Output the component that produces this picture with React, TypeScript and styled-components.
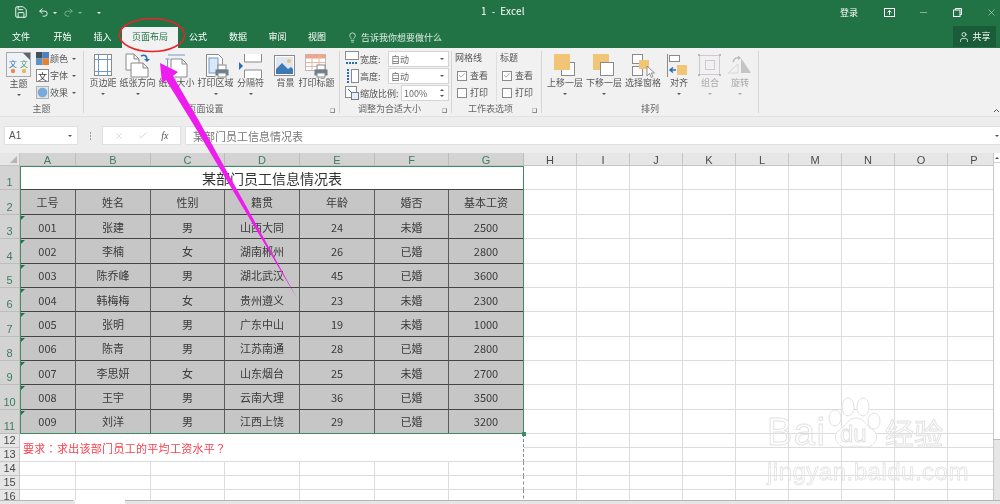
import React from 'react';
import styled, { createGlobalStyle } from 'styled-components';
import { Save, Undo2, Redo2, Lightbulb, Minus, X, Check, User } from 'lucide-react';

const CJK = `"Noto Sans CJK SC", "Liberation Sans", sans-serif`;

const Global = createGlobalStyle`
    html, body { margin: 0; padding: 0; background: #fff; }
    * { box-sizing: border-box; }
`;

const Page = styled.div`
    position: relative;
    width: 1000px;
    height: 504px;
    overflow: hidden;
    display: flex;
    flex-direction: column;
    font-family: ${CJK};
    color: #444;
    background: #e9e9e9;
    filter: blur(0.4px);
`;

/* title bar */
const TitleBar = styled.div`
    height: 24px;
    background: #217346;
    color: #fff;
    display: grid;
    grid-template-columns: 1fr 1fr;
    align-items: center;
    position: relative;
`;

const Qat = styled.div`
    display: flex;
    align-items: center;
    padding-left: 14px;
    height: 24px;
`;

const QatGap = styled.span`
    width: 10px;
`;

const QatCaret = styled.span<{ $dim?: boolean; $gap?: number }>`
    width: 0;
    height: 0;
    margin: 1px ${({ $gap }) => $gap ?? 6}px 0 4px;
    border-left: 2px solid transparent;
    border-right: 2px solid transparent;
    border-top: 2px solid ${({ $dim }) => ($dim ? '#8ab59d' : '#fff')};
`;

const DocTitle = styled.div`
    position: absolute;
    left: 481px;
    top: 3px;
    font-size: 10px;
    line-height: 16px;
    letter-spacing: 0.2px;
    white-space: pre;
`;

const WinControls = styled.div`
    display: flex;
    align-items: center;
    justify-content: flex-end;
    height: 24px;
    margin-right: -8px;
`;

const SignIn = styled.span`
    font-size: 9px;
    width: 32px;
    text-align: left;
`;

const WinBtn = styled.span`
    width: 34px;
    display: flex;
    justify-content: center;
    align-items: center;
`;

/* tabs */
const TabBar = styled.div`
    height: 24px;
    background: #217346;
    display: flex;
    align-items: flex-end;
    color: #fff;
    font-size: 9px;
`;

const Tab = styled.div<{ $w: number; $active?: boolean }>`
    width: ${({ $w }) => $w}px;
    height: 21px;
    line-height: 19px;
    text-align: center;
    background: ${({ $active }) => ($active ? '#f1f1f1' : 'transparent')};
    color: ${({ $active }) => ($active ? '#217346' : '#fff')};
`;

const TellMe = styled.div`
    display: flex;
    align-items: center;
    gap: 3px;
    margin-left: 10px;
    height: 21px;
    color: #dcebe2;
    font-size: 9px;
`;

const ShareBtn = styled.div`
    margin-left: auto;
    margin-right: 4px;
    margin-bottom: 1px;
    width: 43px;
    height: 21px;
    background: #1a5c39;
    display: flex;
    align-items: center;
    justify-content: center;
    gap: 2px;
    font-size: 9px;
`;

/* ribbon */
const Ribbon = styled.div`
    height: 68px;
    background: #f1f1f1;
    display: flex;
    padding: 3px 0;
    position: relative;
`;

const Group = styled.section<{ $w: number }>`
    width: ${({ $w }) => $w}px;
    border-right: 1px solid #d6d6d6;
    display: flex;
    flex-direction: column;
    position: relative;
`;

const GroupBody = styled.div<{ $pad?: number }>`
    flex: 1;
    display: flex;
    padding-left: ${({ $pad }) => $pad ?? 0}px;
`;

const GroupLabel = styled.div<{ $launcher?: boolean }>`
    height: 9px;
    line-height: 9px;
    font-size: 9px;
    text-align: center;
    color: #666;
    padding-right: ${({ $launcher }) => ($launcher ? 12 : 0)}px;
`;

const Launcher = styled.span`
    position: absolute;
    right: 4px;
    bottom: 0;
    width: 5px;
    height: 5px;
    border: 1px solid #8c8c8c;
    border-top-color: #c8c8c8;
    border-left-color: #c8c8c8;
`;

const LargeBtn = styled.div<{ $w: number; $off?: boolean }>`
    width: ${({ $w }) => $w}px;
    display: flex;
    flex-direction: column;
    align-items: center;
    padding-top: 2px;
    font-size: 9px;
    white-space: nowrap;
    color: ${({ $off }) => ($off ? '#a8a8a8' : '#555')};
`;

const BtnText = styled.span`
    line-height: 11px;
    margin-top: -2px;
`;

const Caret = styled.span<{ $off?: boolean }>`
    display: inline-block;
    width: 0;
    height: 0;
    margin-top: 5px;
    border-left: 2px solid transparent;
    border-right: 2px solid transparent;
    border-top: 2px solid ${({ $off }) => ($off ? '#aaa' : '#555')};
`;

const InlineCaret = styled(Caret)`
    margin-top: 0;
`;

const ThemeTile = styled.div`
    width: 25px;
    height: 25px;
    margin: -1px 0 3px;
    background: #d9d9d9;
    border: 1px solid #a9a9a9;
    display: flex;
    align-items: center;
    justify-content: center;
`;

const SmallCol = styled.div`
    display: flex;
    flex-direction: column;
    gap: 4px;
    margin-left: 5px;
    padding-top: 1px;
`;

const SmallRow = styled.div`
    display: flex;
    align-items: center;
    gap: 1px;
    height: 13px;
    font-size: 9px;
    color: #555;
`;

const SmallCaret = styled(Caret)`
    margin: 0 0 0 3px;
`;

const SizeCol = styled.div`
    display: flex;
    flex-direction: column;
    gap: 1px;
    padding-left: 5px;
`;

const SizeRow = styled.div`
    display: flex;
    align-items: center;
    height: 16px;
    font-size: 9px;
    color: #555;
`;

const SizeLabel = styled.span<{ $w: number }>`
    width: ${({ $w }) => $w}px;
    margin-left: 1px;
    white-space: nowrap;
`;

const Combo = styled.div<{ $w: number }>`
    width: ${({ $w }) => $w}px;
    height: 16px;
    background: #fff;
    border: 1px solid #d4d4d4;
    display: flex;
    align-items: center;
    justify-content: space-between;
    padding: 0 4px 0 2px;
    font-size: 9px;
    color: #666;
`;

const Spin = styled.div`
    display: flex;
    flex-direction: column;
    gap: 4px;
`;

const SpinUp = styled.span`
    width: 0;
    height: 0;
    border-left: 2px solid transparent;
    border-right: 2px solid transparent;
    border-bottom: 2px solid #555;
`;

const SpinDown = styled(SpinUp)`
    border-bottom: 0;
    border-top: 2px solid #555;
`;

const OptionCols = styled.div`
    display: flex;
    padding-left: 3px;
`;

const OptionCol = styled.div<{ $w: number; $rule?: boolean; $pad?: number }>`
    width: ${({ $w }) => $w}px;
    display: flex;
    flex-direction: column;
    font-size: 9px;
    color: #555;
    height: 50px;
    padding-left: ${({ $pad }) => $pad ?? 0}px;
    border-right: ${({ $rule }) => ($rule ? '1px solid #dedede' : '0')};
    margin-top: 1px;
`;

const OptionHead = styled.div`
    height: 14px;
    line-height: 12px;
    margin-bottom: 1px;
`;

const OptionRow = styled.div`
    display: flex;
    align-items: center;
    gap: 3px;
    height: 17px;
    padding-left: 2px;
`;

const Box = styled.span`
    width: 10px;
    height: 10px;
    background: #fff;
    border: 1px solid #8a8a8a;
    display: flex;
    align-items: center;
    justify-content: center;
`;

const CollapseMark = styled.svg`
    position: absolute;
    right: 0;
    bottom: 3px;
`;

/* formula bar */
const FormulaBar = styled.div`
    height: 37px;
    padding: 9px 0 8px 4px;
    background: #ededed;
    border-top: 1px solid #e2e2e2;
    display: flex;
    align-items: stretch;
`;

const NameBox = styled.div`
    width: 74px;
    background: #fff;
    border: 1px solid #e0e0e0;
    display: flex;
    align-items: center;
    justify-content: space-between;
    padding: 0 5px 0 4px;
    font-family: "Liberation Sans", sans-serif;
    font-size: 10px;
    color: #555;
`;

const Grip = styled.div`
    width: 24px;
    display: flex;
    flex-direction: column;
    align-items: center;
    justify-content: center;
    gap: 1px;
`;

const GripDot = styled.span`
    width: 1px;
    height: 2px;
    background: #a0a0a0;
`;

const FxBox = styled.div`
    width: 79px;
    background: #fff;
    border: 1px solid #e0e0e0;
    display: flex;
    align-items: center;
    justify-content: space-around;
    padding: 0 5px;
    color: #b4b4b4;
`;

const FxMark = styled.span`
    font-family: "Liberation Serif", serif;
    font-style: italic;
    font-size: 10px;
    color: #555;
`;

const FormulaInput = styled.div`
    margin-left: 4px;
    flex: 1;
    background: #fff;
    border: 1px solid #e0e0e0;
    border-right: 0;
    display: flex;
    align-items: center;
    justify-content: space-between;
    padding: 0 1px 0 7px;
    font-size: 11px;
    color: #777;
`;

/* sheet */
const SheetArea = styled.div`
    height: 347px;
    display: flex;
    background: #fff;
`;

const Grid = styled.div`
    position: relative;
    width: 993px;
    height: 347px;
    overflow: hidden;
    display: grid;
    grid-template-columns: 20px 56px 75px 74px 75px 75px 74px 75px repeat(9, 53px);
    grid-template-rows: 13px 24px 25px repeat(9, 24.33px) repeat(5, 14px);
    font-size: 11px;
`;

const Corner = styled.div`
    background: #e6e6e6;
    border-right: 1px solid #c4c4c4;
    border-bottom: 1px solid #c4c4c4;
    position: relative;
    &::after {
        content: '';
        position: absolute;
        right: 2px;
        bottom: 2px;
        border-left: 7px solid transparent;
        border-bottom: 7px solid #b5b5b5;
    }
`;

const ColHead = styled.div<{ $sel?: boolean }>`
    background: ${({ $sel }) => ($sel ? '#d3d3d3' : '#e6e6e6')};
    color: ${({ $sel }) => ($sel ? '#3f7d5e' : '#4a4a4a')};
    border-right: 1px solid ${({ $sel }) => ($sel ? '#bdbdbd' : '#c6c6c6')};
    border-bottom: 1px solid #c4c4c4;
    font-family: "Liberation Sans", sans-serif;
    font-size: 11px;
    line-height: 14px;
    text-align: center;
`;

const RowHead = styled.div<{ $sel?: boolean }>`
    background: ${({ $sel }) => ($sel ? '#d3d3d3' : '#e6e6e6')};
    color: ${({ $sel }) => ($sel ? '#3f7d5e' : '#4a4a4a')};
    border-bottom: 1px solid ${({ $sel }) => ($sel ? '#bdbdbd' : '#c6c6c6')};
    border-right: 1px solid #c4c4c4;
    font-family: "Liberation Sans", sans-serif;
    font-size: 11px;
    line-height: 13px;
    display: flex;
    align-items: flex-end;
    justify-content: center;
`;

const Blank = styled.div<{ $dash?: boolean }>`
    border-right: 1px ${({ $dash }) => ($dash ? 'dashed #8a8a8a' : 'solid #dcdcdc')};
    border-bottom: 1px solid #dcdcdc;
`;

const TitleCell = styled.div`
    grid-column: span 7;
    background: #fff;
    border-bottom: 1px solid #444;
    color: #333;
    font-size: 14px;
    display: flex;
    align-items: center;
    justify-content: center;
`;

const DataCell = styled.div<{ $flag?: boolean }>`
    position: relative;
    background: #c6c6c6;
    border-right: 1.5px solid #5c5c5c;
    border-bottom: 1px solid #444;
    color: #3a3a3a;
    display: flex;
    align-items: center;
    justify-content: center;
    &::before {
        content: '';
        display: ${({ $flag }) => ($flag ? 'block' : 'none')};
        position: absolute;
        left: 1px;
        top: 1px;
        border-top: 4px solid #217346;
        border-right: 4px solid transparent;
    }
`;

const NoteCell = styled.div`
    grid-column: span 7;
    grid-row: span 2;
    border-right: 1px dashed #8a8a8a;
    border-bottom: 1px solid #dcdcdc;
    color: #f8404c;
    font-family: "Noto Sans CJK TC", "Noto Sans CJK SC", sans-serif;
    font-size: 11px;
    letter-spacing: 0.3px;
    display: flex;
    align-items: center;
    padding: 1px 0 0 3px;
`;

const Selection = styled.div`
    position: absolute;
    inset: 0;
    grid-area: 2 / 2 / 13 / 9;
    border: 1.5px solid #3f8a64;
    pointer-events: none;
    &::after {
        content: '';
        position: absolute;
        right: -3px;
        bottom: -3px;
        width: 4px;
        height: 4px;
        background: #3f8a64;
    }
`;

const VScroll = styled.div`
    width: 7px;
    background: #e6e6e6;
    border-left: 1px solid #c8c8c8;
    display: flex;
    flex-direction: column;
`;

const ScrollArrow = styled.div`
    height: 10px;
    background: #fff;
    border-bottom: 1px solid #cfcfcf;
    display: flex;
    align-items: center;
    justify-content: center;
`;

const ScrollThumb = styled.div`
    height: 277px;
    background: #fff;
    border-bottom: 1px solid #bdbdbd;
`;

const TabStrip = styled.div`
    flex: 1;
    display: flex;
    background: #e6e6e6;
`;

const SheetTab = styled.div<{ $w: number; $on?: boolean }>`
    width: ${({ $w }) => $w}px;
    flex: ${({ $w }) => ($w ? 'none' : 1)};
    background: ${({ $on }) => ($on ? '#fff' : '#e6e6e6')};
    border-top: ${({ $on }) => ($on ? '0' : '1px solid #b4b4b4')};
    margin-right: ${({ $w }) => ($w === 73 ? 2 : 0)}px;
`;

/* annotations on top of the screenshot */
const Marks = styled.svg`
    position: absolute;
    left: 0;
    top: 0;
    pointer-events: none;
`;

const Watermark = styled.div`
    position: absolute;
    left: 767px;
    top: 396px;
    width: 180px;
    pointer-events: none;
    color: transparent;
    -webkit-text-stroke: 1px #e3e3e3;
    font-family: "Liberation Sans", sans-serif;
`;

const WmTop = styled.div`
    display: flex;
    align-items: flex-end;
    height: 58px;
`;

const WmBai = styled.span`
    font-size: 38px;
    line-height: 44px;
    width: 60px;
    letter-spacing: 1.5px;
`;

const WmPaw = styled.div`
    width: 58px;
    height: 58px;
    flex: none;
    position: relative;
`;

const WmDu = styled.span`
    position: absolute;
    left: 13px;
    bottom: 7px;
    font-size: 24px;
    line-height: 26px;
    -webkit-text-stroke: 0.8px #dcdcdc;
`;

const WmCn = styled.span`
    font-family: ${CJK};
    font-size: 29px;
    line-height: 44px;
    white-space: nowrap;
`;

const WmUrl = styled.div`
    font-size: 24px;
    line-height: 26px;
    margin-top: 5px;
    white-space: nowrap;
    letter-spacing: 0.5px;
    -webkit-text-stroke: 0.8px #e3e3e3;
`;

/* ribbon drawings */
const Ico = ({ children }: { children: React.ReactNode }) => (
    <svg width="28" height="26" viewBox="0 0 28 26" fill="none">{children}</svg>
);

const Printer = ({ x, y }: { x: number; y: number }) => (
    <g transform={`translate(${x} ${y})`}>
        <rect x="3" y="0" width="8" height="5" fill="#fff" stroke="#8a8a8a" />
        <rect x="0.5" y="4.5" width="13" height="6" fill="#6d7f8f" />
        <rect x="3" y="8" width="8" height="4" fill="#fff" stroke="#8a8a8a" />
    </g>
);

const Sheet = ({ x, y, w, h }: { x: number; y: number; w: number; h: number }) => (
    <path
        d={`M${x} ${y}h${w - 5}l5 5v${h - 5}h-${w}z M${x + w - 5} ${y}v5h5`}
        fill="#fff"
        stroke="#8a8a8a"
    />
);

const MarginsIcon = () => (
    <Ico>
        <rect x="5.5" y="1.5" width="17" height="21" fill="#fff" stroke="#8a8a8a" />
        <path d="M9.5 1.5v21M18.5 1.5v21M5.5 6.5h17M5.5 18.5h17" stroke="#6d9bd1" />
    </Ico>
);

const OrientationIcon = () => (
    <Ico>
        <Sheet x={2} y={1} w={13} h={16} />
        <Sheet x={7} y={10} w={17} h={14} />
        <path d="M17 3c4-2 6 0 6 4" stroke="#2b6cb5" strokeWidth="1.6" />
        <path d="M20 6l3 3 3-3z" fill="#2b6cb5" />
    </Ico>
);

const SizeIcon = () => (
    <Ico>
        <path d="M5 2h17M4.5 6v18M2.5 6h4M2.5 24h4" stroke="#6d9bd1" />
        <Sheet x={8} y={6} w={16} h={18} />
    </Ico>
);

const PrintAreaIcon = () => (
    <Ico>
        <path d="M4.5 1.5h12l4 4v6M4.5 1.5v22h9" fill="#fff" stroke="#8a8a8a" />
        <rect x="7" y="5" width="9" height="15" fill="#dce7f4" stroke="#6d9bd1" />
        <Printer x={13} y={12} />
    </Ico>
);

const BreaksIcon = () => (
    <Ico>
        <path d="M7.5 1v8h17V1M7.5 25v-8h17v8" fill="#fff" stroke="#8a8a8a" />
        <path d="M2 9l4 4-4 4z" fill="#2b6cb5" />
    </Ico>
);

const BackgroundIcon = () => (
    <Ico>
        <rect x="2.5" y="2.5" width="20" height="20" fill="#fff" stroke="#8a8a8a" />
        <rect x="4" y="4" width="17" height="17" fill="#dfe8f0" />
        <circle cx="17" cy="8" r="2" fill="#edc26f" />
        <path d="M4 21v-5l6-6 6 6 3-2 2 2v5z" fill="#3f79b5" />
    </Ico>
);

const PrintTitlesIcon = () => (
    <Ico>
        <rect x="2.5" y="1.5" width="20" height="16" fill="#fff" stroke="#b8b8b8" />
        <rect x="2.5" y="1.5" width="20" height="4" fill="#f0a58a" />
        <path d="M2.5 9.5h20M2.5 13.5h20M9 1.5v16M16 1.5v16" stroke="#e8b5a2" />
        <Printer x={11} y={12} />
    </Ico>
);

const ForwardIcon = ({ back }: { back?: boolean }) => (
    <Ico>
        {back ? (
            <>
                <rect x="3" y="1" width="16" height="16" fill="#f0c575" />
                <rect x="10.5" y="9.5" width="13" height="13" fill="#fff" stroke="#8a8a8a" />
            </>
        ) : (
            <>
                <rect x="10.5" y="9.5" width="13" height="13" fill="#fff" stroke="#8a8a8a" />
                <rect x="3" y="1" width="16" height="16" fill="#f0c575" />
            </>
        )}
    </Ico>
);

const PaneIcon = () => (
    <Ico>
        <rect x="3.5" y="1.5" width="10" height="9" fill="#fff" stroke="#8a8a8a" />
        <rect x="3.5" y="13.5" width="10" height="9" fill="#fff" stroke="#8a8a8a" />
        <rect x="10" y="7" width="10" height="9" fill="#f0c575" />
        <path d="M18 13v10l2.500-2.500 2 4 1.500-1-2-3.500h3.500z" fill="#fff" stroke="#777" strokeWidth="0.8" />
    </Ico>
);

const AlignIcon = () => (
    <Ico>
        <path d="M2.500 1v23" stroke="#8a8a8a" />
        <rect x="4.500" y="2.500" width="10" height="6" fill="#fff" stroke="#8a8a8a" />
        <rect x="12" y="12" width="10" height="10" fill="#f0c575" />
        <path d="M11 17H6M8 14.500L5 17l3 2.500" stroke="#2b6cb5" strokeWidth="1.500" />
    </Ico>
);

const GroupIcon = () => (
    <Ico>
        <rect x="3.500" y="2.500" width="20" height="19" stroke="#d0c8d0" />
        <rect x="9.500" y="7.500" width="9" height="9" stroke="#d0c8d0" />
        <path d="M2 1h2v2H2zM23 1h2v2h-2zM2 21h2v2H2zM23 21h2v2h-2z" fill="#b8b8b8" />
    </Ico>
);

const RotateIcon = () => (
    <Ico>
        <path d="M15 5l10 15H15z" fill="#c4c4c4" />
        <path d="M2 20l10-9v9z" fill="#f1f1f1" stroke="#d8d8d8" />
        <path d="M7 9c1-4 4-5 7-4" stroke="#b8b8b8" strokeWidth="1.400" />
        <path d="M12 2.500l3 2.500-3 2z" fill="#b8b8b8" />
    </Ico>
);

const ThemeGlyph = () => (
    <svg width="23" height="23" viewBox="0 0 23 23" fill="none">
        <rect width="23" height="23" fill="#eef2f7" />
        <path d="M16 0h7v7z" fill="#5d6470" />
        <text x="2" y="14" fontSize="8" fill="#3a6ea5">文</text>
        <text x="13" y="14" fontSize="8" fill="#4b9a5a">文</text>
        <circle cx="6" cy="18" r="2.200" fill="#e58a50" />
        <circle cx="17" cy="18" r="2.200" fill="#e6b94f" />
    </svg>
);

const ColorsGlyph = () => (
    <svg width="13" height="13" viewBox="0 0 13 13">
        <rect width="6.500" height="6.500" fill="#444f5e" />
        <rect x="6.500" width="6.500" height="6.500" fill="#4c7fbe" />
        <rect y="6.500" width="6.500" height="6.500" fill="#5a95c9" />
        <rect x="6.500" y="6.500" width="6.500" height="6.500" fill="#e8812f" />
    </svg>
);

const FontsGlyph = () => (
    <svg width="13" height="13" viewBox="0 0 13 13" fill="none">
        <rect x="0.500" y="0.500" width="12" height="12" fill="#fff" stroke="#8a8a8a" />
        <text x="2" y="10.500" fontSize="9" fill="#333">文</text>
    </svg>
);

const EffectsGlyph = () => (
    <svg width="13" height="13" viewBox="0 0 13 13" fill="none">
        <rect x="0.500" y="0.500" width="12" height="12" fill="#e4e4e4" stroke="#b0b0b0" />
        <circle cx="6.500" cy="6.500" r="4.800" fill="#7aa9dd" />
    </svg>
);

const WidthGlyph = () => (
    <svg width="14" height="16" viewBox="0 0 14 16" fill="none">
        <rect x="0.500" y="0.500" width="13" height="8" fill="#fff" stroke="#8a8a8a" />
        <path d="M1 12h12" stroke="#2b6cb5" strokeDasharray="2 1" strokeWidth="2" />
    </svg>
);

const HeightGlyph = () => (
    <svg width="14" height="16" viewBox="0 0 14 16" fill="none">
        <rect x="6.500" y="1.500" width="7" height="13" fill="#fff" stroke="#8a8a8a" />
        <path d="M3 1v14" stroke="#2b6cb5" strokeDasharray="2 1" strokeWidth="2" />
    </svg>
);

const ScaleGlyph = () => (
    <svg width="14" height="14" viewBox="0 0 14 14" fill="none">
        <rect x="0.500" y="0.500" width="11" height="11" fill="#fff" stroke="#8a8a8a" />
        <rect x="6.500" y="6.500" width="7" height="7" fill="#e9eef5" stroke="#6d7f8f" />
        <path d="M3 3l4 4" stroke="#2b6cb5" />
    </svg>
);

const COL_LETTERS = 'ABCDEFGHIJKLMNOP'.split('');
const TAIL = 9;

const HEADS = ['工号', '姓名', '性别', '籍贯', '年龄', '婚否', '基本工资'];

const STAFF = [
    ['001', '张建', '男', '山西大同', '24', '未婚', '2500'],
    ['002', '李楠', '女', '湖南郴州', '26', '已婚', '2800'],
    ['003', '陈乔峰', '男', '湖北武汉', '45', '已婚', '3600'],
    ['004', '韩梅梅', '女', '贵州遵义', '23', '未婚', '2300'],
    ['005', '张明', '男', '广东中山', '19', '未婚', '1000'],
    ['006', '陈青', '男', '江苏南通', '28', '已婚', '2800'],
    ['007', '李思妍', '女', '山东烟台', '25', '未婚', '2700'],
    ['008', '王宇', '男', '云南大理', '36', '已婚', '3500'],
    ['009', '刘洋', '男', '江西上饶', '29', '已婚', '3200'],
];

const PAGE_BUTTONS = [
    { w: 34, label: '页边距', icon: <MarginsIcon />, caret: true },
    { w: 35, label: '纸张方向', icon: <OrientationIcon />, caret: true },
    { w: 43, label: '纸张大小', icon: <SizeIcon />, caret: true },
    { w: 35, label: '打印区域', icon: <PrintAreaIcon />, caret: true },
    { w: 35, label: '分隔符', icon: <BreaksIcon />, caret: true },
    { w: 35, label: '背景', icon: <BackgroundIcon /> },
    { w: 27, label: '打印标题', icon: <PrintTitlesIcon /> },
];

const ARRANGE_BUTTONS = [
    { w: 40, label: '上移一层', icon: <ForwardIcon />, caret: true },
    { w: 38, label: '下移一层', icon: <ForwardIcon back />, caret: true },
    { w: 40, label: '选择窗格', icon: <PaneIcon /> },
    { w: 32, label: '对齐', icon: <AlignIcon />, caret: true },
    { w: 30, label: '组合', icon: <GroupIcon />, caret: true, off: true },
    { w: 30, label: '旋转', icon: <RotateIcon />, caret: true, off: true },
];

const TABS = [
    { w: 42, label: '文件' },
    { w: 41, label: '开始' },
    { w: 39, label: '插入' },
    { w: 56, label: '页面布局', active: true },
    { w: 40, label: '公式' },
    { w: 40, label: '数据' },
    { w: 39, label: '审阅' },
    { w: 40, label: '视图' },
];

const blanks = (n: number, key: string) =>
    Array.from({ length: n }, (_, i) => <Blank key={`${key}-${i}`} />);

const Tick = () => <Check size={9} strokeWidth={1.5} color="#555" />;

const RibbonButton = ({ w, label, icon, caret, off }: {
    w: number; label: string; icon: React.ReactNode; caret?: boolean; off?: boolean;
}) => (
    <LargeBtn $w={w} $off={off}>
        {icon}
        <BtnText>{label}</BtnText>
        {caret && <Caret $off={off} />}
    </LargeBtn>
);

export default function App() {
    return (
        <Page>
            <Global />
            <TitleBar>
                <Qat>
                    <Save size={14} strokeWidth={1.6} />
                    <QatGap />
                    <Undo2 size={11} strokeWidth={2} />
                    <QatCaret />
                    <Redo2 size={11} strokeWidth={2} color="#7fb096" />
                    <QatCaret $dim $gap={11} />
                    <QatCaret />
                </Qat>
                <DocTitle>1  -  Excel</DocTitle>
                <WinControls>
                    <SignIn>登录</SignIn>
                    <WinBtn>
                        <svg width="11" height="9" viewBox="0 0 11 9" fill="none">
                            <rect x="0.5" y="0.5" width="10" height="8" stroke="#fff" />
                            <path d="M5.500 2v5M3.500 4.500l2-2 2 2" stroke="#fff" />
                        </svg>
                    </WinBtn>
                    <WinBtn><Minus size={11} strokeWidth={1} /></WinBtn>
                    <WinBtn>
                        <svg width="9" height="9" viewBox="0 0 9 9" fill="none">
                            <rect x="0.500" y="2" width="6.500" height="6.500" stroke="#fff" />
                            <path d="M2.500 2V0.500h6v6H7" stroke="#fff" />
                        </svg>
                    </WinBtn>
                    <WinBtn><X size={11} strokeWidth={1} /></WinBtn>
                </WinControls>
            </TitleBar>
            <TabBar>
                {TABS.map(t => (
                    <Tab key={t.label} $w={t.w} $active={t.active}>{t.label}</Tab>
                ))}
                <TellMe>
                    <Lightbulb size={11} strokeWidth={1.5} color="#fff" />
                    告诉我你想要做什么
                </TellMe>
                <ShareBtn>
                    <User size={12} strokeWidth={1.5} />
                    共享
                </ShareBtn>
            </TabBar>
            <Ribbon>
                <Group $w={84}>
                    <GroupBody $pad={6}>
                        <LargeBtn $w={25}>
                            <ThemeTile><ThemeGlyph /></ThemeTile>
                            <BtnText>主题</BtnText>
                            <Caret />
                        </LargeBtn>
                        <SmallCol>
                            <SmallRow><ColorsGlyph />颜色<SmallCaret /></SmallRow>
                            <SmallRow><FontsGlyph />字体<SmallCaret /></SmallRow>
                            <SmallRow><EffectsGlyph />效果<SmallCaret /></SmallRow>
                        </SmallCol>
                    </GroupBody>
                    <GroupLabel>主题</GroupLabel>
                </Group>
                <Group $w={256}>
                    <GroupBody $pad={2}>
                        {PAGE_BUTTONS.map(b => <RibbonButton key={b.label} {...b} />)}
                    </GroupBody>
                    <GroupLabel $launcher>页面设置</GroupLabel>
                    <Launcher />
                </Group>
                <Group $w={112}>
                    <GroupBody>
                        <SizeCol>
                            <SizeRow><WidthGlyph /><SizeLabel $w={28}>宽度:</SizeLabel><Combo $w={61}>自动<InlineCaret /></Combo></SizeRow>
                            <SizeRow><HeightGlyph /><SizeLabel $w={28}>高度:</SizeLabel><Combo $w={61}>自动<InlineCaret /></Combo></SizeRow>
                            <SizeRow><ScaleGlyph /><SizeLabel $w={41}>缩放比例:</SizeLabel><Combo $w={48}>100%<Spin><SpinUp /><SpinDown /></Spin></Combo></SizeRow>
                        </SizeCol>
                    </GroupBody>
                    <GroupLabel $launcher>调整为合适大小</GroupLabel>
                    <Launcher />
                </Group>
                <Group $w={90}>
                    <GroupBody>
                        <OptionCols>
                            <OptionCol $w={42} $rule>
                                <OptionHead>网格线</OptionHead>
                                <OptionRow><Box><Tick /></Box>查看</OptionRow>
                                <OptionRow><Box />打印</OptionRow>
                            </OptionCol>
                            <OptionCol $w={40} $pad={3}>
                                <OptionHead>标题</OptionHead>
                                <OptionRow><Box><Tick /></Box>查看</OptionRow>
                                <OptionRow><Box />打印</OptionRow>
                            </OptionCol>
                        </OptionCols>
                    </GroupBody>
                    <GroupLabel $launcher>工作表选项</GroupLabel>
                    <Launcher />
                </Group>
                <Group $w={217}>
                    <GroupBody $pad={3}>
                        {ARRANGE_BUTTONS.map(b => <RibbonButton key={b.label} {...b} />)}
                    </GroupBody>
                    <GroupLabel>排列</GroupLabel>
                </Group>
                <CollapseMark width="7" height="5" viewBox="0 0 7 5" fill="none">
                    <path d="M1 4l2.500-2.500L6 4" stroke="#555" />
                </CollapseMark>
            </Ribbon>
            <FormulaBar>
                <NameBox>A1<InlineCaret /></NameBox>
                <Grip><GripDot /><GripDot /><GripDot /></Grip>
                <FxBox>
                    <X size={10} strokeWidth={1.2} />
                    <Check size={11} strokeWidth={1.2} />
                    <FxMark>fx</FxMark>
                </FxBox>
                <FormulaInput>
                    <span>某部门员工信息情况表</span>
                    <InlineCaret />
                </FormulaInput>
            </FormulaBar>
            <SheetArea>
                <Grid>
                    <Corner />
                    {COL_LETTERS.map((c, i) => <ColHead key={c} $sel={i < 7}>{c}</ColHead>)}

                    <RowHead $sel>1</RowHead>
                    <TitleCell>某部门员工信息情况表</TitleCell>
                    {blanks(TAIL, 'r1')}

                    <RowHead $sel>2</RowHead>
                    {HEADS.map(h => <DataCell key={h}>{h}</DataCell>)}
                    {blanks(TAIL, 'r2')}

                    {STAFF.map((row, r) => (
                        <React.Fragment key={row[0]}>
                            <RowHead $sel>{r + 3}</RowHead>
                            {row.map((v, c) => <DataCell key={c} $flag={c === 0}>{v}</DataCell>)}
                            {blanks(TAIL, `s${r}`)}
                        </React.Fragment>
                    ))}

                    <RowHead>12</RowHead>
                    <NoteCell>要求：求出该部门员工的平均工资水平？</NoteCell>
                    {blanks(TAIL, 'r12')}
                    <RowHead>13</RowHead>
                    {blanks(TAIL, 'r13')}

                    {[14, 15, 16].map(n => (
                        <React.Fragment key={n}>
                            <RowHead>{n}</RowHead>
                            {blanks(6, `a${n}`)}
                            <Blank $dash />
                            {blanks(TAIL, `b${n}`)}
                        </React.Fragment>
                    ))}
                    <Selection />
                </Grid>
                <VScroll>
                    <ScrollArrow><SpinUp /></ScrollArrow>
                    <ScrollThumb />
                </VScroll>
            </SheetArea>
            <TabStrip>
                <SheetTab $w={73} />
                <SheetTab $w={50} $on />
                <SheetTab $w={0} />
            </TabStrip>

            <Marks width="1000" height="504" viewBox="0 0 1000 504" fill="none">
                <ellipse cx="152" cy="35" rx="32.500" ry="16.500" stroke="#e5252a" strokeWidth="1.600" />
                <path d="M160 63L178 72 173 76 199 121 297.500 299 192 122 166 80 162 83z" fill="#ee1cec" />
            </Marks>
            <Watermark>
                <WmTop>
                    <WmBai>Bai</WmBai>
                    <WmPaw>
                        <svg width="58" height="58" viewBox="0 0 58 58" fill="#fff" stroke="#e3e3e3">
                            <ellipse cx="21" cy="11" rx="6" ry="9" />
                            <ellipse cx="36" cy="11" rx="6" ry="9" />
                            <ellipse cx="8" cy="22" rx="6" ry="8" />
                            <ellipse cx="47" cy="25" rx="6" ry="8" />
                            <path d="M29 22c8 0 10 8 17 12 7 5 3 17-7 17-4 0-7-1-10-1s-6 1-10 1C9 51 5 39 12 34c7-4 9-12 17-12z" />
                        </svg>
                        <WmDu>du</WmDu>
                    </WmPaw>
                    <WmCn>经验</WmCn>
                </WmTop>
                <WmUrl>jingyan.baidu.com</WmUrl>
            </Watermark>
        </Page>
    );
}
